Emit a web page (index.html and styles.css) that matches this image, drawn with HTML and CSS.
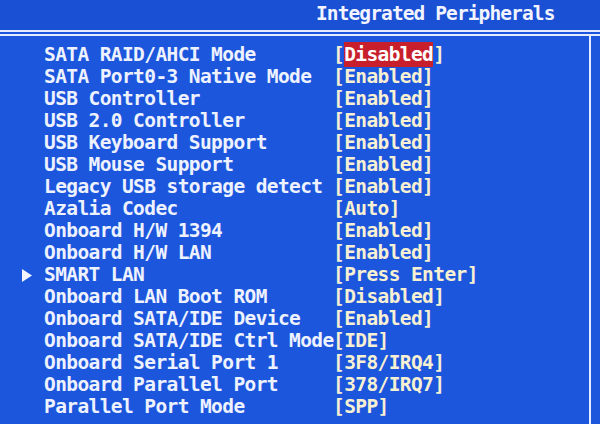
FILE: index.html
```html
<!DOCTYPE html>
<html>
<head>
<meta charset="utf-8">
<link rel="stylesheet" href="styles.css">
</head>
<body>
<div class="screen">
  <header class="header">
    <div class="title">Integrated Peripherals</div>
  </header>
  <div class="rule"></div>
  <div class="main">
    <div class="list">
      <div class="row"><span class="mark"></span><span class="label">SATA RAID/AHCI Mode</span><span class="value">[<span class="sel">Disabled</span>]</span></div>
      <div class="row"><span class="mark"></span><span class="label">SATA Port0-3 Native Mode</span><span class="value">[Enabled]</span></div>
      <div class="row"><span class="mark"></span><span class="label">USB Controller</span><span class="value">[Enabled]</span></div>
      <div class="row"><span class="mark"></span><span class="label">USB 2.0 Controller</span><span class="value">[Enabled]</span></div>
      <div class="row"><span class="mark"></span><span class="label">USB Keyboard Support</span><span class="value">[Enabled]</span></div>
      <div class="row"><span class="mark"></span><span class="label">USB Mouse Support</span><span class="value">[Enabled]</span></div>
      <div class="row"><span class="mark"></span><span class="label">Legacy USB storage detect</span><span class="value">[Enabled]</span></div>
      <div class="row"><span class="mark"></span><span class="label">Azalia Codec</span><span class="value">[Auto]</span></div>
      <div class="row"><span class="mark"></span><span class="label">Onboard H/W 1394</span><span class="value">[Enabled]</span></div>
      <div class="row"><span class="mark"></span><span class="label">Onboard H/W LAN</span><span class="value">[Enabled]</span></div>
      <div class="row"><span class="mark"><svg width="10" height="13" viewBox="0 0 10 13"><polygon points="0,0 10,6.5 0,13" fill="#f4f6ff"/></svg></span><span class="label">SMART LAN</span><span class="value">[Press Enter]</span></div>
      <div class="row"><span class="mark"></span><span class="label">Onboard LAN Boot ROM</span><span class="value">[Disabled]</span></div>
      <div class="row"><span class="mark"></span><span class="label">Onboard SATA/IDE Device</span><span class="value">[Enabled]</span></div>
      <div class="row"><span class="mark"></span><span class="label">Onboard SATA/IDE Ctrl Mode</span><span class="value">[IDE]</span></div>
      <div class="row"><span class="mark"></span><span class="label">Onboard Serial Port 1</span><span class="value">[3F8/IRQ4]</span></div>
      <div class="row"><span class="mark"></span><span class="label">Onboard Parallel Port</span><span class="value">[378/IRQ7]</span></div>
      <div class="row"><span class="mark"></span><span class="label">Parallel Port Mode</span><span class="value">[SPP]</span></div>
    </div>
  </div>
</div>
</body>
</html>
```
FILE: styles.css
```css
html, body {
  margin: 0;
  padding: 0;
  background: #1c56dc;
}
.screen {
  width: 600px;
  height: 424px;
  overflow: hidden;
  background: #1c56dc;
  font-family: "DejaVu Sans Mono", "Liberation Mono", monospace;
  font-weight: bold;
  font-size: 19.5px;
  letter-spacing: -0.6px;
  color: #eef2ff;
}
.header {
  height: 30px;
  background: #1a50d4;
}
.title {
  padding-top: 3px;
  padding-left: 316px;
  line-height: 22px;
  letter-spacing: -0.9px;
  color: #f2f4ff;
  white-space: pre;
}
.rule {
  height: 2px;
  border-top: 2px solid #e6ecff;
  border-bottom: 2px solid #e6ecff;
}
.main {
  display: flex;
}
.list {
  width: 591px;
  height: 388px;
  border-right: 2px solid #e6ecff;
  padding-top: 8px;
  box-sizing: border-box;
}
.row {
  display: grid;
  grid-template-columns: 44px 289px auto;
  height: 22px;
  line-height: 22px;
  white-space: pre;
}
.mark {
  display: flex;
  align-items: center;
  padding-left: 22px;
}
.label {
  color: #eef2ff;
}
.value {
  color: #f7f0d2;
}
.sel {
  background: #c81f2c;
  color: #ffffff;
  padding: 1px 0;
}
```
